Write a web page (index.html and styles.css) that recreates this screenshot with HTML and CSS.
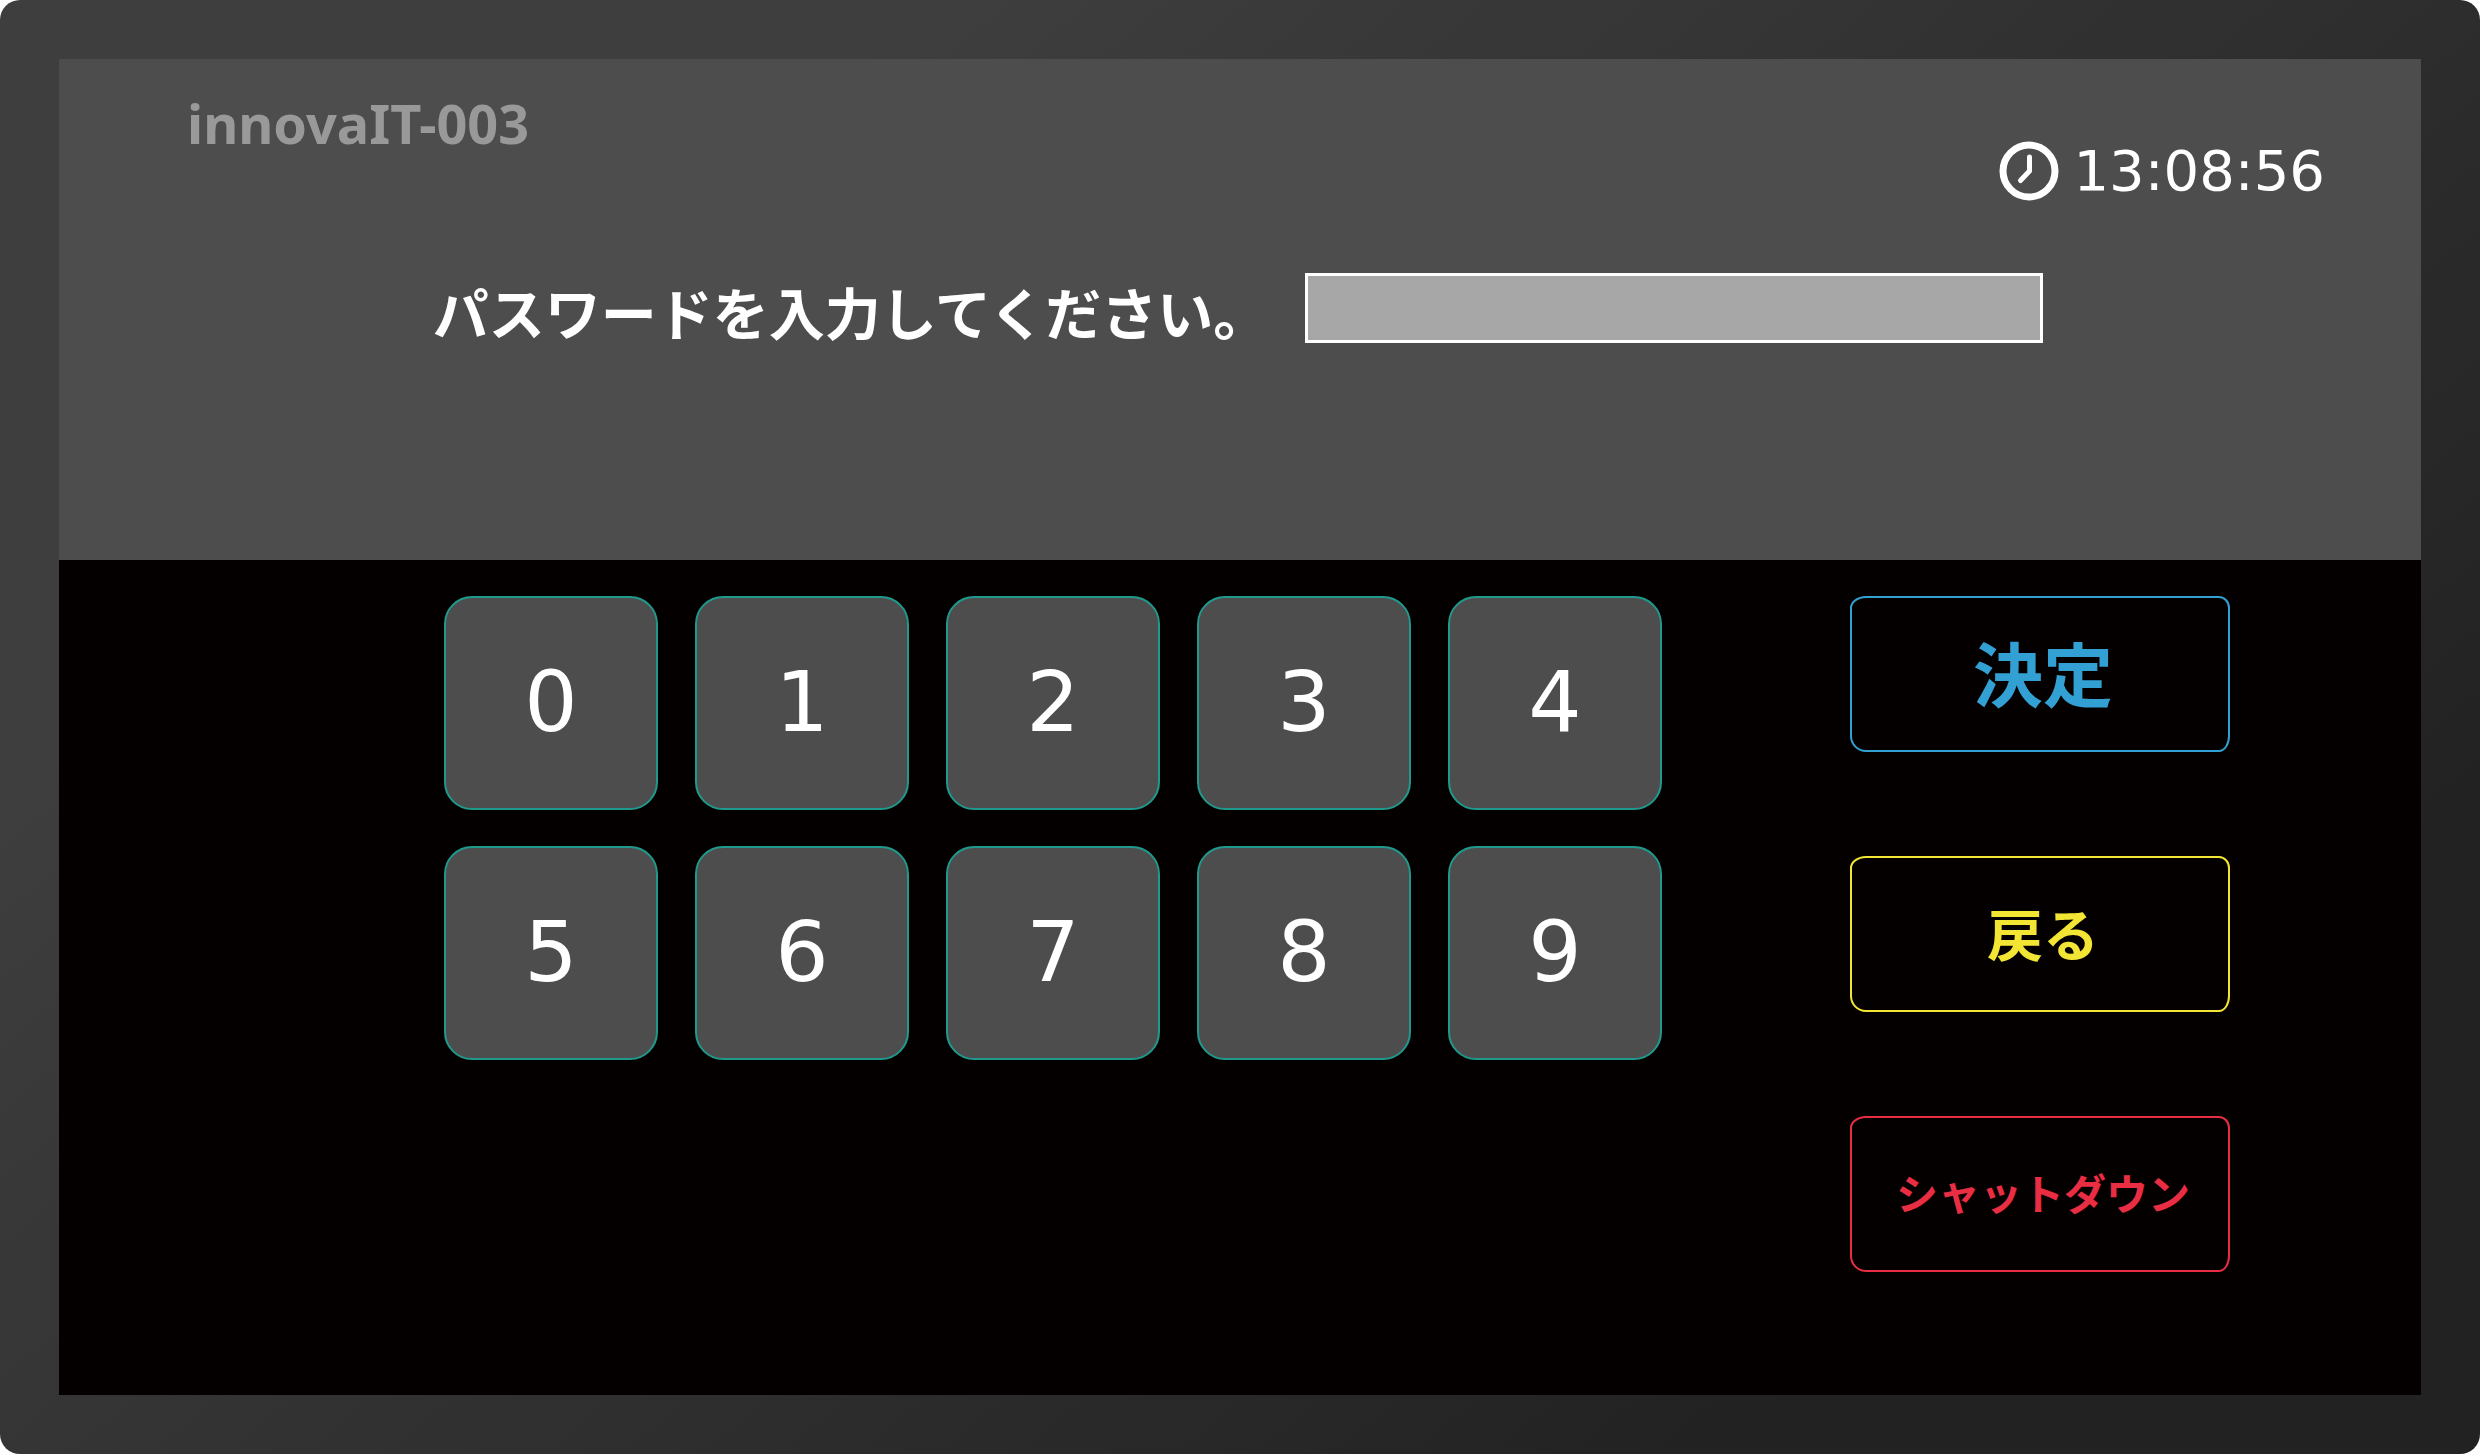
FILE: index.html
```
<!DOCTYPE html>
<html lang="ja">
<head>
    <meta charset="UTF-8">
    <meta name="viewport" content="width=device-width, initial-scale=1.0">
    <title>innovaIT-003</title>
    <link rel="stylesheet" href="styles.css">
</head>
<body>
    <div class="bezel">
        <form class="screen">
            <header class="header">
                <div class="top-bar">
                    <h1 class="device-name">innovaIT-003</h1>
                    <div class="clock">
                        <svg class="clock-icon" xmlns="http://www.w3.org/2000/svg" viewBox="0 0 60 60" fill="none" stroke="currentColor" stroke-linecap="round" stroke-linejoin="round">
                            <circle cx="30" cy="30" r="26" stroke-width="7"></circle>
                            <polyline points="30.5 16 30.5 30 21.5 39.5" stroke-width="5"></polyline>
                        </svg>
                        <time>13:08:56</time>
                    </div>
                </div>
                <div class="password-row">
                    <label class="password-label" for="password">パスワードを入力してください。</label>
                    <input type="password" id="password" class="password-input">
                </div>
            </header>

            <main class="controls">
                <div class="keypad">
                    <button type="button" class="key">0</button>
                    <button type="button" class="key">1</button>
                    <button type="button" class="key">2</button>
                    <button type="button" class="key">3</button>
                    <button type="button" class="key">4</button>
                    <button type="button" class="key">5</button>
                    <button type="button" class="key">6</button>
                    <button type="button" class="key">7</button>
                    <button type="button" class="key">8</button>
                    <button type="button" class="key">9</button>
                </div>
                <div class="actions">
                    <button type="submit" class="action action-enter">決定</button>
                    <button type="button" class="action action-back">戻る</button>
                    <button type="button" class="action action-shutdown">シャットダウン</button>
                </div>
            </main>
        </form>
    </div>

    <script>
        const password = document.getElementById('password');

        document.querySelectorAll('.key').forEach((key) => {
            key.addEventListener('click', () => {
                password.value += key.textContent;
            });
        });

        document.querySelector('.action-back').addEventListener('click', () => {
            password.value = password.value.slice(0, -1);
        });

        document.querySelector('.screen').addEventListener('submit', (e) => {
            e.preventDefault();
        });
    </script>
</body>
</html>
```
FILE: styles.css
```
:root {
    --panel-color: #4d4d4d;
    --key-border: #20998d;
    --enter-color: #33a0d4;
    --back-color: #f3e534;
    --shutdown-color: #e92d43;
}

* {
    margin: 0;
    padding: 0;
    box-sizing: border-box;
}

body {
    font-family: "DejaVu Sans", "Noto Sans CJK JP", sans-serif;
    background-color: white;
    color: white;
}

.bezel {
    display: flex;
    min-height: 100vh;
    padding: 59px;
    border-radius: 20px;
    background: linear-gradient(140deg, #3e3e3e 22%, #222 82%);
}

.screen {
    flex: 1;
    display: grid;
    grid-template-rows: 3fr 5fr;
    background-color: #040000;
}

.header {
    background-color: var(--panel-color);
}

.top-bar {
    display: flex;
    justify-content: space-between;
    align-items: flex-start;
    padding: 32px 96px 0 128px;
}

.device-name {
    font-family: "Noto Sans", sans-serif;
    font-size: 54px;
    line-height: 64px;
    color: #999;
}

.clock {
    display: flex;
    align-items: center;
    gap: 14px;
    margin-top: 48px;
    font-size: 56px;
    line-height: 64px;
}

.clock-icon {
    width: 60px;
    height: 60px;
}

.password-row {
    display: flex;
    justify-content: center;
    align-items: center;
    gap: 36px;
    margin-top: 62px;
    padding-right: 4px;
}

.password-label {
    padding-top: 6px;
    font-family: "Noto Sans CJK JP", sans-serif;
    font-size: 56px;
    font-weight: bold;
    line-height: 80px;
}

.password-input {
    width: 738px;
    height: 70px;
    padding: 0 16px;
    border: 3px solid white;
    background-color: #a7a7a7;
    font-size: 42px;
}

.controls {
    display: flex;
    justify-content: space-between;
    align-items: flex-start;
    padding: 36px 191px 36px 385px;
}

.keypad {
    display: grid;
    grid-template-columns: repeat(5, 214px);
    gap: 36px 37px;
}

.key {
    height: 214px;
    padding-bottom: 2px;
    border: 2px solid var(--key-border);
    border-radius: 28px;
    background-color: var(--panel-color);
    color: white;
    font-family: inherit;
    font-size: 84px;
    cursor: pointer;
}

.actions {
    display: flex;
    flex-direction: column;
    gap: 104px;
    width: 380px;
}

.action {
    height: 156px;
    padding: 0 0 6px 6px;
    border: 2px solid currentColor;
    border-radius: 16px 11px 11px 16px / 12px 12px 16px 16px;
    background: none;
    font-family: "Noto Sans CJK JP", sans-serif;
    font-weight: bold;
    cursor: pointer;
}

.action-enter {
    color: var(--enter-color);
    font-size: 70px;
}

.action-back {
    color: var(--back-color);
    font-size: 56px;
}

.action-shutdown {
    color: var(--shutdown-color);
    font-size: 42px;
}
```
